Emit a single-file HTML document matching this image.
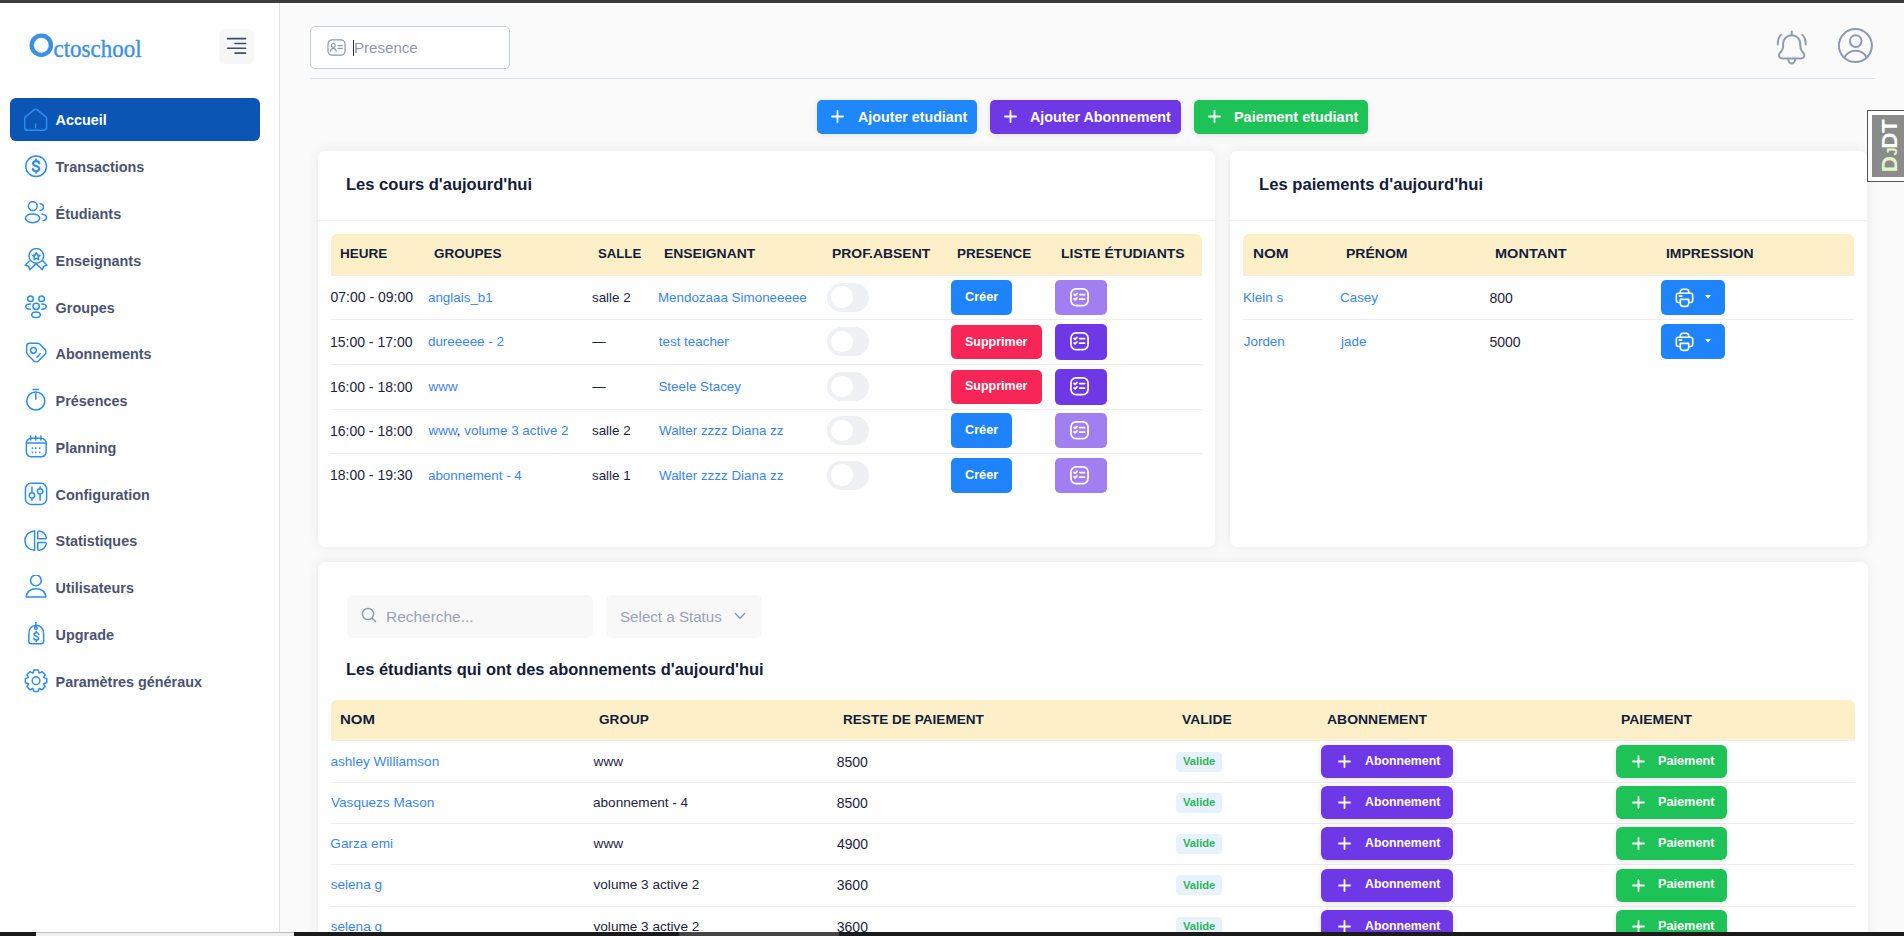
<!DOCTYPE html>
<html><head><meta charset="utf-8">
<style>
*{box-sizing:border-box;margin:0;padding:0}
html,body{width:1904px;height:936px;overflow:hidden;background:#fafafa;font-family:"Liberation Sans",sans-serif;color:#1f2433}
.a{position:absolute}
.t{position:absolute;line-height:0;white-space:nowrap}
#topbar{left:0;top:0;width:1904px;height:3px;background:#3c3c3c}
#side{left:0;top:3px;width:280px;height:933px;background:#fff;border-right:1px solid #dfe2ec}
.logoO{left:29px;top:33px;width:24px;height:24px}
.logoT{left:53.5px;top:35.5px;-webkit-text-stroke:0.35px #3d90e4;font-family:"Liberation Serif",serif;font-size:23px;color:#3d90e4;line-height:30px;transform:scaleY(1.08);transform-origin:0 100%}
.menubtn{left:219px;top:29px;width:35px;height:35px;border-radius:6px;background:#f7f7f8}
.ic{fill:none;stroke:#2d8cf0;stroke-width:1.5;stroke-linecap:round;stroke-linejoin:round}
.nav{left:10px;width:250px;height:43px;border-radius:6px;display:flex;align-items:center;font-weight:bold;font-size:14.4px;color:#4a5372}
.nav svg{position:absolute;left:14px;top:9.5px;width:24px;height:24px;fill:none;stroke:#2d8cf0;stroke-width:1.5;stroke-linecap:round;stroke-linejoin:round}
.nav span{position:absolute;left:46px}
.nav.act{background:#0b56b4;color:#fff}
.nav.act svg{stroke:#2d8cf0}
</style></head><body>
<div id="topbar" class="a"></div>
<div id="side" class="a"></div>
<svg class="a" style="left:29px;top:33px" width="25" height="25" viewBox="0 0 25 25"><ellipse cx="12.3" cy="12.2" rx="9.6" ry="9.65" fill="none" stroke="#3a8fe6" stroke-width="4.3"/></svg>
<div class="a logoT">ctoschool</div>
<div class="a menubtn"><svg width="35" height="35" viewBox="0 0 35 35" style="position:absolute;left:0;top:0" stroke="#414b6e" stroke-width="1.6" stroke-linecap="round"><path d="M8.5 9.6H26.6M16 14.5H26.6M8.5 19.3H26.6M16 24.1H26.6"/></svg></div>
<div class="a" style="left:10px;top:98px;width:250px;height:43px;border-radius:6px;background:#0b56b4"></div>
<svg class="a ic" style="left:24px;top:107.70px" width="24" height="24" viewBox="0 0 24 24"><path d="M0.6 10.9Q0.6 9.7 1.5 8.9L9.9 1.9Q11.6 .6 13.3 1.9L21.7 8.9Q22.6 9.7 22.6 10.9V19.1Q22.6 22.3 19.4 22.3H3.8Q0.6 22.3 0.6 19.1Z"/><path d="M11.6 16v3.8"/></svg>
<div class="t" style="left:55.6px;top:120.26px;font-size:14.4px;font-weight:bold;color:#fff">Accueil</div>
<svg class="a ic" style="left:24px;top:154.45px" width="24" height="24" viewBox="0 0 24 24"><circle cx="12.1" cy="12.25" r="10.35"/><path stroke-width="2.1" d="M15.3 9.2C15.1 7.8 13.9 7.1 12.1 7.1C10.2 7.1 9 8 9 9.4C9 12.6 15.3 11.3 15.3 14.8C15.3 16.3 14 17.2 12.1 17.2C10.2 17.2 9 16.4 8.8 14.9M12.1 5.5V7.1M12.1 17.2V18.8"/></svg>
<div class="t" style="left:55.6px;top:167.31px;font-size:14.4px;font-weight:bold;color:#4a5372">Transactions</div>
<svg class="a ic" style="left:24px;top:201.20px" width="24" height="24" viewBox="0 0 24 24"><circle cx="8.8" cy="5.05" r="4.4"/><ellipse cx="8.6" cy="17.3" rx="7.15" ry="4.35"/><path d="M16.1 2.75a3.35 3.35 0 0 1 0 6.7"/><path d="M17.9 12.9C20.7 13.4 22.6 14.9 22.6 16.5C22.6 17.9 21.3 19 19.1 19.6"/></svg>
<div class="t" style="left:55.6px;top:214.06px;font-size:14.4px;font-weight:bold;color:#4a5372">Étudiants</div>
<svg class="a ic" style="left:24px;top:247.95px" width="24" height="24" viewBox="0 0 24 24"><circle cx="12.3" cy="7.9" r="7.3"/><path d="M12.3 4.8L13.4 7.1L15.9 7.4L14.1 9.1L14.6 11.6L12.3 10.4L10 11.6L10.5 9.1L8.7 7.4L11.2 7.1Z"/><path d="M5.3 13.1L1.2 17.3L4.5 18.2L5.9 21.7L12.1 15.6L18.3 21.7L19.7 18.2L23 17.3L19 13.1"/></svg>
<div class="t" style="left:55.6px;top:260.81px;font-size:14.4px;font-weight:bold;color:#4a5372">Enseignants</div>
<svg class="a ic" style="left:24px;top:294.70px" width="24" height="24" viewBox="0 0 24 24"><circle cx="6.5" cy="3.75" r="2.85"/><circle cx="17.6" cy="3.75" r="2.85"/><circle cx="12.1" cy="11.35" r="3.2"/><ellipse cx="12" cy="19.8" rx="4.25" ry="2.75"/><path d="M6.4 9.1C3.6 9.3 1.75 10.4 1.75 11.7C1.75 13 3.6 14 6.4 14.2M17.8 9.1C20.6 9.3 22.3 10.4 22.3 11.7C22.3 13 20.6 14 17.8 14.2"/></svg>
<div class="t" style="left:55.6px;top:307.56px;font-size:14.4px;font-weight:bold;color:#4a5372">Groupes</div>
<svg class="a ic" style="left:24px;top:341.45px" width="24" height="24" viewBox="0 0 24 24"><path d="M2.65 5.6C2.65 3.3 3.3 2.4 5.6 2.35H13.6C14.7 2.35 15.3 2.7 16.1 3.5L21 8.4C22.3 9.7 22.3 12 21 13.3L14.6 19.7C13.3 21 11 21 9.7 19.7L4 14C3 13 2.65 12.4 2.65 11Z"/><circle cx="9.45" cy="9.3" r="2.85"/><path d="M12.9 16.3L16.2 12.8"/></svg>
<div class="t" style="left:55.6px;top:354.31px;font-size:14.4px;font-weight:bold;color:#4a5372">Abonnements</div>
<svg class="a ic" style="left:24px;top:388.20px" width="24" height="24" viewBox="0 0 24 24"><circle cx="11.8" cy="13" r="9.05"/><path d="M9.2 1.6H14.4M11.8 5.6V11.3"/></svg>
<div class="t" style="left:55.6px;top:401.06px;font-size:14.4px;font-weight:bold;color:#4a5372">Présences</div>
<svg class="a ic" style="left:24px;top:434.95px" width="24" height="24" viewBox="0 0 24 24"><rect x="2.35" y="3.35" width="19.8" height="18.5" rx="5"/><path d="M2.35 8.1H22.15M6.7 1.1V5M11.8 1.1V5M16.9 1.1V5"/><path stroke-width="1.7" d="M8.4 13.2h.1M11.8 13.2h.1M15.6 13.2h.1M8.4 17.3h.1M11.8 17.3h.1M15.6 17.3h.1"/></svg>
<div class="t" style="left:55.6px;top:447.81px;font-size:14.4px;font-weight:bold;color:#4a5372">Planning</div>
<svg class="a ic" style="left:24px;top:481.70px" width="24" height="24" viewBox="0 0 24 24"><rect x="1.45" y="1.35" width="21.15" height="21.1" rx="5.5"/><circle cx="7.95" cy="13.4" r="2.7"/><circle cx="16.1" cy="9.35" r="2.7"/><path d="M7.95 5.1V10M7.95 16.8V18.2M16.1 4.7V5.9M16.1 12.8V18.2"/></svg>
<div class="t" style="left:55.6px;top:494.56px;font-size:14.4px;font-weight:bold;color:#4a5372">Configuration</div>
<svg class="a ic" style="left:24px;top:528.45px" width="24" height="24" viewBox="0 0 24 24"><path d="M10.6 2.9A9.7 9.7 0 0 0 10.6 22.3Z"/><path d="M13.75 10.8V4.4C13.75 3.5 14.4 2.8 15.3 3C18.8 3.6 21.6 6.6 22.3 9.4C22.4 10.2 21.9 10.8 21 10.8Z"/><path d="M13.75 14.4V20.9C13.75 21.8 14.4 22.5 15.3 22.3C18.8 21.7 21.6 18.7 22.3 15.9C22.4 15.1 21.9 14.4 21 14.4Z"/></svg>
<div class="t" style="left:55.6px;top:541.31px;font-size:14.4px;font-weight:bold;color:#4a5372">Statistiques</div>
<svg class="a ic" style="left:24px;top:575.20px" width="24" height="24" viewBox="0 0 24 24"><circle cx="11.9" cy="5.4" r="5.35"/><path d="M2.35 21.95C2.35 16.9 6.6 13.65 12 13.65C17.4 13.65 21.75 16.9 21.75 21.95Z"/></svg>
<div class="t" style="left:55.6px;top:588.06px;font-size:14.4px;font-weight:bold;color:#4a5372">Utilisateurs</div>
<svg class="a ic" style="left:24px;top:621.95px" width="24" height="24" viewBox="0 0 24 24"><path d="M4.85 12C4.85 6.5 8 3.2 12.2 3.2C16.4 3.2 19.65 6.5 19.65 12V19.3C19.65 21.1 18.9 21.8 17.1 21.8H7.3C5.5 21.8 4.85 21.1 4.85 19.3Z"/><circle cx="11.9" cy="5.9" r="1.3"/><path d="M11.9 0.3V4.6"/><path stroke-width="1.6" d="M14.6 12.4C14.4 11.3 13.4 10.8 12.2 10.8C10.9 10.8 10 11.5 10 12.5C10 14.7 14.6 13.7 14.6 16.2C14.6 17.3 13.7 18 12.2 18C10.9 18 10 17.4 9.8 16.4M12.2 9.6V10.8M12.2 18V19.4"/></svg>
<div class="t" style="left:55.6px;top:634.81px;font-size:14.4px;font-weight:bold;color:#4a5372">Upgrade</div>
<svg class="a ic" style="left:24px;top:668.70px" width="24" height="24" viewBox="0 0 24 24"><circle cx="12.05" cy="11.7" r="3.85"/><path d="M8.94 4.00 L9.97 1.00 L14.13 1.00 L15.16 4.00 L15.29 4.06 L18.15 2.66 L21.09 5.60 L19.69 8.46 L19.75 8.59 L22.75 9.62 L22.75 13.78 L19.75 14.81 L19.69 14.94 L21.09 17.80 L18.15 20.74 L15.29 19.34 L15.16 19.40 L14.13 22.40 L9.97 22.40 L8.94 19.40 L8.81 19.34 L5.95 20.74 L3.01 17.80 L4.41 14.94 L4.35 14.81 L1.35 13.78 L1.35 9.62 L4.35 8.59 L4.41 8.46 L3.01 5.60 L5.95 2.66 L8.81 4.06Z"/></svg>
<div class="t" style="left:55.6px;top:681.56px;font-size:14.4px;font-weight:bold;color:#4a5372">Paramètres généraux</div>
<div class="a" style="left:280.00px;top:3.00px;width:1624.00px;height:1.00px;background:#fff;border-radius:0px;"></div>
<div class="a" style="left:310px;top:26px;width:200px;height:43px;border:1px solid #c7cddc;border-radius:5px;background:#fff"></div>
<svg class="a" style="left:327px;top:39px" width="19" height="17" viewBox="0 0 19 17" fill="none" stroke="#8e98b4" stroke-width="1.2" stroke-linecap="round"><rect x="1" y="0.8" width="17" height="15.4" rx="4.2"/><circle cx="6.3" cy="6.4" r="1.9"/><path d="M3.4 12.2c.4-1.8 1.6-2.8 2.9-2.8s2.5 1 2.9 2.8M11 6.6h4.3M11 9.3h4.3"/></svg>
<div class="a" style="left:353.00px;top:39.50px;width:1.30px;height:16.50px;background:#2e3555;border-radius:0px;"></div>
<div class="t" style="left:353.66px;top:47.78px;font-size:14.2px;color:#8f98b4;transform:scaleX(1.0653);transform-origin:1.14px 0;">Presence</div>
<div class="a" style="left:310.00px;top:78.00px;width:1565.00px;height:1.00px;background:#dde1ec;border-radius:0px;"></div>
<svg class="a" style="left:1766px;top:22px" width="116" height="50" viewBox="0 0 116 50" fill="none" stroke="#8e99b5" stroke-width="2" stroke-linecap="round" stroke-linejoin="round"><path d="M25.7 9.4V12.6"/><path d="M25.7 13.2C20.9 13.2 17.1 17 17.1 21.8V24.6C17.1 26.4 16.5 27.8 15.4 29.2L13.8 31.2C12.2 33.3 13.4 36.5 16.2 36.5H35.2C38 36.5 39.2 33.3 37.6 31.2L36 29.2C34.9 27.8 34.3 26.4 34.3 24.6V21.8C34.3 17 30.5 13.2 25.7 13.2Z"/><path d="M22.2 36.8C22.2 39.2 23.8 41.5 25.7 41.5C27.6 41.5 29.2 39.2 29.2 36.8"/><path d="M15 12.9C12.9 14.9 11.7 17.8 11.7 22.4M36.4 12.9C38.5 14.9 39.7 17.8 39.7 22.4"/><circle cx="89.4" cy="23.6" r="16.5"/><circle cx="89.75" cy="19.05" r="5.85"/><path d="M78.6 35.2C81 31 85 28.7 89.6 28.7C94.2 28.7 98.2 31 100.6 35.2"/></svg>
<div class="a" style="left:1866.5px;top:109.5px;width:40px;height:72px;background:#fff;border:1px solid #555"></div>
<div class="a" style="left:1871.5px;top:115px;width:34px;height:61.6px;background:#8b8b8b"></div>
<svg class="a" style="left:0;top:0" width="1904" height="200" viewBox="0 0 1904 200"><text transform="translate(1897.2 170.80) rotate(-90)" x="-1.49" y="0" font-family="Liberation Sans" font-weight="bold" font-size="22.6" fill="#e0f8cc">D</text><text transform="translate(1897.2 155.40) rotate(-90)" x="-0.22" y="0" font-family="Liberation Sans" font-weight="bold" font-size="14.6" fill="#e0f8cc">J</text><text transform="translate(1897.2 147.30) rotate(-90)" x="-1.49" y="0" font-family="Liberation Sans" font-weight="bold" font-size="22.6" fill="#fff">D</text><text transform="translate(1897.2 132.80) rotate(-90)" x="-0.25" y="0" font-family="Liberation Sans" font-weight="bold" font-size="22.6" fill="#fff">T</text></svg>
<div class="a" style="left:817.00px;top:100.00px;width:160.00px;height:34.00px;background:#1e87fa;border-radius:5px;box-shadow:0 1px 6px rgba(0,0,0,0.10)"></div>
<svg class="a" style="left:831px;top:110px" width="13" height="13" viewBox="0 0 13 13" stroke="#fff" stroke-width="1.8" stroke-linecap="round"><path d="M6.5 1v11M1 6.5h11"/></svg>
<div class="t" style="left:858.04px;top:116.91px;font-size:14.4px;color:#fff;font-weight:bold;transform:scaleX(0.9896);transform-origin:0.36px 0;">Ajouter etudiant</div>
<div class="a" style="left:990.00px;top:100.00px;width:191.00px;height:34.00px;background:#6f38e5;border-radius:5px;box-shadow:0 1px 6px rgba(0,0,0,0.10)"></div>
<svg class="a" style="left:1004px;top:110px" width="13" height="13" viewBox="0 0 13 13" stroke="#fff" stroke-width="1.8" stroke-linecap="round"><path d="M6.5 1v11M1 6.5h11"/></svg>
<div class="t" style="left:1030.14px;top:116.91px;font-size:14.4px;color:#fff;font-weight:bold;transform:scaleX(0.9936);transform-origin:0.36px 0;">Ajouter Abonnement</div>
<div class="a" style="left:1194.00px;top:100.00px;width:174.00px;height:34.00px;background:#1dc356;border-radius:5px;box-shadow:0 1px 6px rgba(0,0,0,0.10)"></div>
<svg class="a" style="left:1208px;top:110px" width="13" height="13" viewBox="0 0 13 13" stroke="#fff" stroke-width="1.8" stroke-linecap="round"><path d="M6.5 1v11M1 6.5h11"/></svg>
<div class="t" style="left:1233.56px;top:116.91px;font-size:14.4px;color:#fff;font-weight:bold;transform:scaleX(1.0026);transform-origin:0.94px 0;">Paiement etudiant</div>
<div class="a" style="left:318.00px;top:151.00px;width:897.00px;height:396.00px;background:#fff;border-radius:7px;box-shadow:0 0 14px rgba(0,0,0,0.065)"></div>
<div class="a" style="left:1230.00px;top:151.00px;width:637.00px;height:396.00px;background:#fff;border-radius:7px;box-shadow:0 0 14px rgba(0,0,0,0.065)"></div>
<div class="a" style="left:318.00px;top:562.00px;width:1550.00px;height:400.00px;background:#fff;border-radius:7px;box-shadow:0 0 14px rgba(0,0,0,0.065)"></div>
<div class="t" style="left:346.42px;top:185.25px;font-size:16.6px;color:#141c3a;font-weight:bold;transform:scaleX(0.9963);transform-origin:1.08px 0;">Les cours d'aujourd'hui</div>
<div class="a" style="left:318.00px;top:220.00px;width:897.00px;height:1.00px;background:#eef0f3;border-radius:0px;"></div>
<div class="a" style="left:331.00px;top:234.00px;width:871.00px;height:41.50px;background:#fdf0c9;border-radius:6px 6px 0 0;"></div>
<div class="a" style="left:331.00px;top:275.00px;width:871.00px;height:1.00px;background:#eceef3;border-radius:0px;"></div>
<div class="t" style="left:339.71px;top:254.25px;font-size:13.7px;color:#141c3a;font-weight:bold;transform:scaleX(0.9875);transform-origin:0.89px 0;">HEURE</div>
<div class="t" style="left:433.75px;top:254.25px;font-size:13.7px;color:#141c3a;font-weight:bold;transform:scaleX(0.9871);transform-origin:0.55px 0;">GROUPES</div>
<div class="t" style="left:597.86px;top:254.25px;font-size:13.7px;color:#141c3a;font-weight:bold;transform:scaleX(0.9626);transform-origin:0.34px 0;">SALLE</div>
<div class="t" style="left:663.81px;top:254.25px;font-size:13.7px;color:#141c3a;font-weight:bold;transform:scaleX(1.0175);transform-origin:0.89px 0;">ENSEIGNANT</div>
<div class="t" style="left:832.11px;top:254.25px;font-size:13.7px;color:#141c3a;font-weight:bold;transform:scaleX(1.0168);transform-origin:0.89px 0;">PROF.ABSENT</div>
<div class="t" style="left:956.71px;top:254.25px;font-size:13.7px;color:#141c3a;font-weight:bold;transform:scaleX(0.9854);transform-origin:0.89px 0;">PRESENCE</div>
<div class="t" style="left:1060.71px;top:254.25px;font-size:13.7px;color:#141c3a;font-weight:bold;transform:scaleX(1.0226);transform-origin:0.89px 0;">LISTE ÉTUDIANTS</div>
<div class="a" style="left:331.00px;top:319.40px;width:871.00px;height:1.00px;background:#ececf1;border-radius:0px;"></div>
<div class="a" style="left:331.00px;top:364.20px;width:871.00px;height:1.00px;background:#ececf1;border-radius:0px;"></div>
<div class="a" style="left:331.00px;top:408.50px;width:871.00px;height:1.00px;background:#ececf1;border-radius:0px;"></div>
<div class="a" style="left:331.00px;top:453.20px;width:871.00px;height:1.00px;background:#ececf1;border-radius:0px;"></div>
<div class="t" style="left:330.51px;top:297.45px;font-size:14px;color:#1c2340;">07:00 - 09:00</div>
<div class="t" style="left:427.96px;top:297.66px;font-size:13.4px;color:#3a85f6;">anglais_b1</div>
<div class="t" style="left:591.96px;top:297.66px;font-size:13.4px;color:#1c2340;">salle 2</div>
<div class="t" style="left:657.93px;top:297.66px;font-size:13.4px;color:#3a85f6;">Mendozaaa Simoneeeee</div>
<div class="a" style="left:827.00px;top:282.80px;width:42.00px;height:29.00px;background:#eff0f3;border-radius:15px;"></div>
<div class="a" style="left:831.00px;top:286.40px;width:21.60px;height:21.60px;background:#fff;border-radius:11px;"></div>
<div class="a" style="left:951.00px;top:279.80px;width:61.00px;height:35.00px;background:#1f84fb;border-radius:5px;"></div>
<div class="t" style="left:965.20px;top:296.93px;font-size:12.6px;color:#fff;font-weight:bold;transform:scaleX(1.0076);transform-origin:0.50px 0;">Créer</div>
<div class="a" style="left:1055.00px;top:279.80px;width:52.00px;height:35.00px;background:#a27ff0;border-radius:5px;"></div>
<svg class="a" style="left:1070px;top:287.70px" width="19" height="19" viewBox="0 0 19 19" fill="none" stroke="#fff" stroke-width="1.7" stroke-linecap="round" stroke-linejoin="round"><rect x="0.95" y="0.95" width="17.1" height="16.6" rx="5"/><path d="M4 6.4l1.1 1.1 1.9-2.1M4 10.9l1.1 1.1 1.9-2.1M9.6 6.6h5M9.6 11.2h5" /></svg>
<div class="t" style="left:329.95px;top:341.85px;font-size:14px;color:#1c2340;">15:00 - 17:00</div>
<div class="t" style="left:427.96px;top:342.06px;font-size:13.4px;color:#3a85f6;">dureeeee - 2</div>
<div class="t" style="left:592.30px;top:342.06px;font-size:13.4px;color:#1c2340;">—</div>
<div class="t" style="left:658.80px;top:342.06px;font-size:13.4px;color:#3a85f6;">test teacher</div>
<div class="a" style="left:827.00px;top:327.20px;width:42.00px;height:29.00px;background:#eff0f3;border-radius:15px;"></div>
<div class="a" style="left:831.00px;top:330.80px;width:21.60px;height:21.60px;background:#fff;border-radius:11px;"></div>
<div class="a" style="left:951.00px;top:324.70px;width:91.00px;height:34.00px;background:#f72656;border-radius:5px;"></div>
<div class="t" style="left:965.38px;top:341.53px;font-size:12.6px;color:#fff;font-weight:bold;transform:scaleX(0.9921);transform-origin:0.32px 0;">Supprimer</div>
<div class="a" style="left:1055.00px;top:323.70px;width:52.00px;height:36.00px;background:#6f38e6;border-radius:5px;"></div>
<svg class="a" style="left:1070px;top:332.10px" width="19" height="19" viewBox="0 0 19 19" fill="none" stroke="#fff" stroke-width="1.7" stroke-linecap="round" stroke-linejoin="round"><rect x="0.95" y="0.95" width="17.1" height="16.6" rx="5"/><path d="M4 6.4l1.1 1.1 1.9-2.1M4 10.9l1.1 1.1 1.9-2.1M9.6 6.6h5M9.6 11.2h5" /></svg>
<div class="t" style="left:329.95px;top:386.65px;font-size:14px;color:#1c2340;">16:00 - 18:00</div>
<div class="t" style="left:428.57px;top:386.86px;font-size:13.4px;color:#3a85f6;">www</div>
<div class="t" style="left:592.30px;top:386.86px;font-size:13.4px;color:#1c2340;">—</div>
<div class="t" style="left:658.40px;top:386.86px;font-size:13.4px;color:#3a85f6;">Steele Stacey</div>
<div class="a" style="left:827.00px;top:372.00px;width:42.00px;height:29.00px;background:#eff0f3;border-radius:15px;"></div>
<div class="a" style="left:831.00px;top:375.60px;width:21.60px;height:21.60px;background:#fff;border-radius:11px;"></div>
<div class="a" style="left:951.00px;top:369.50px;width:91.00px;height:34.00px;background:#f72656;border-radius:5px;"></div>
<div class="t" style="left:965.38px;top:386.33px;font-size:12.6px;color:#fff;font-weight:bold;transform:scaleX(0.9921);transform-origin:0.32px 0;">Supprimer</div>
<div class="a" style="left:1055.00px;top:368.50px;width:52.00px;height:36.00px;background:#6f38e6;border-radius:5px;"></div>
<svg class="a" style="left:1070px;top:376.90px" width="19" height="19" viewBox="0 0 19 19" fill="none" stroke="#fff" stroke-width="1.7" stroke-linecap="round" stroke-linejoin="round"><rect x="0.95" y="0.95" width="17.1" height="16.6" rx="5"/><path d="M4 6.4l1.1 1.1 1.9-2.1M4 10.9l1.1 1.1 1.9-2.1M9.6 6.6h5M9.6 11.2h5" /></svg>
<div class="t" style="left:329.95px;top:430.85px;font-size:14px;color:#1c2340;">16:00 - 18:00</div>
<div class="t" style="left:428.57px;top:431.06px;font-size:13.4px;color:#3a85f6;">www<span style="color:#1c2340">,</span> volume 3 active 2</div>
<div class="t" style="left:591.96px;top:431.06px;font-size:13.4px;color:#1c2340;">salle 2</div>
<div class="t" style="left:659.00px;top:431.06px;font-size:13.4px;color:#3a85f6;">Walter zzzz Diana zz</div>
<div class="a" style="left:827.00px;top:416.20px;width:42.00px;height:29.00px;background:#eff0f3;border-radius:15px;"></div>
<div class="a" style="left:831.00px;top:419.80px;width:21.60px;height:21.60px;background:#fff;border-radius:11px;"></div>
<div class="a" style="left:951.00px;top:413.20px;width:61.00px;height:35.00px;background:#1f84fb;border-radius:5px;"></div>
<div class="t" style="left:965.20px;top:430.33px;font-size:12.6px;color:#fff;font-weight:bold;transform:scaleX(1.0076);transform-origin:0.50px 0;">Créer</div>
<div class="a" style="left:1055.00px;top:413.20px;width:52.00px;height:35.00px;background:#a27ff0;border-radius:5px;"></div>
<svg class="a" style="left:1070px;top:421.10px" width="19" height="19" viewBox="0 0 19 19" fill="none" stroke="#fff" stroke-width="1.7" stroke-linecap="round" stroke-linejoin="round"><rect x="0.95" y="0.95" width="17.1" height="16.6" rx="5"/><path d="M4 6.4l1.1 1.1 1.9-2.1M4 10.9l1.1 1.1 1.9-2.1M9.6 6.6h5M9.6 11.2h5" /></svg>
<div class="t" style="left:329.95px;top:475.45px;font-size:14px;color:#1c2340;">18:00 - 19:30</div>
<div class="t" style="left:427.96px;top:475.66px;font-size:13.4px;color:#3a85f6;">abonnement - 4</div>
<div class="t" style="left:591.96px;top:475.66px;font-size:13.4px;color:#1c2340;">salle 1</div>
<div class="t" style="left:659.00px;top:475.66px;font-size:13.4px;color:#3a85f6;">Walter zzzz Diana zz</div>
<div class="a" style="left:827.00px;top:460.80px;width:42.00px;height:29.00px;background:#eff0f3;border-radius:15px;"></div>
<div class="a" style="left:831.00px;top:464.40px;width:21.60px;height:21.60px;background:#fff;border-radius:11px;"></div>
<div class="a" style="left:951.00px;top:457.80px;width:61.00px;height:35.00px;background:#1f84fb;border-radius:5px;"></div>
<div class="t" style="left:965.20px;top:474.93px;font-size:12.6px;color:#fff;font-weight:bold;transform:scaleX(1.0076);transform-origin:0.50px 0;">Créer</div>
<div class="a" style="left:1055.00px;top:457.80px;width:52.00px;height:35.00px;background:#a27ff0;border-radius:5px;"></div>
<svg class="a" style="left:1070px;top:465.70px" width="19" height="19" viewBox="0 0 19 19" fill="none" stroke="#fff" stroke-width="1.7" stroke-linecap="round" stroke-linejoin="round"><rect x="0.95" y="0.95" width="17.1" height="16.6" rx="5"/><path d="M4 6.4l1.1 1.1 1.9-2.1M4 10.9l1.1 1.1 1.9-2.1M9.6 6.6h5M9.6 11.2h5" /></svg>
<div class="t" style="left:1259.02px;top:185.25px;font-size:16.6px;color:#141c3a;font-weight:bold;transform:scaleX(1.0017);transform-origin:1.08px 0;">Les paiements d'aujourd'hui</div>
<div class="a" style="left:1230.00px;top:220.00px;width:637.00px;height:1.00px;background:#eef0f3;border-radius:0px;"></div>
<div class="a" style="left:1243.00px;top:234.00px;width:611.00px;height:41.50px;background:#fdf0c9;border-radius:6px 6px 0 0;"></div>
<div class="a" style="left:1243.00px;top:275.00px;width:611.00px;height:1.00px;background:#eceef3;border-radius:0px;"></div>
<div class="t" style="left:1252.51px;top:254.25px;font-size:13.7px;color:#141c3a;font-weight:bold;transform:scaleX(1.1189);transform-origin:0.89px 0;">NOM</div>
<div class="t" style="left:1345.91px;top:254.25px;font-size:13.7px;color:#141c3a;font-weight:bold;transform:scaleX(1.0246);transform-origin:0.89px 0;">PRÉNOM</div>
<div class="t" style="left:1495.41px;top:254.25px;font-size:13.7px;color:#141c3a;font-weight:bold;transform:scaleX(1.0629);transform-origin:0.89px 0;">MONTANT</div>
<div class="t" style="left:1666.11px;top:254.25px;font-size:13.7px;color:#141c3a;font-weight:bold;transform:scaleX(1.0192);transform-origin:0.89px 0;">IMPRESSION</div>
<div class="a" style="left:1243.00px;top:319.40px;width:611.00px;height:1.00px;background:#ececf1;border-radius:0px;"></div>
<div class="t" style="left:1242.93px;top:297.86px;font-size:13.4px;color:#3a85f6;">Klein s</div>
<div class="t" style="left:1340.03px;top:297.86px;font-size:13.4px;color:#3a85f6;">Casey</div>
<div class="t" style="left:1489.44px;top:297.65px;font-size:14px;color:#1c2340;">800</div>
<div class="a" style="left:1661.00px;top:280.10px;width:64.00px;height:35.00px;background:#1f84fb;border-radius:5px;"></div>
<svg class="a" style="left:1675px;top:288.00px" width="19" height="20" viewBox="0 0 19 20" fill="none" stroke="#fff" stroke-width="1.6" stroke-linejoin="round"><path d="M5.3 5V3.8c0-1.5 1-2.5 2.5-2.5h3.4c1.5 0 2.5 1 2.5 2.5V5"/><path d="M5 14.5H3.5c-1.3 0-2.2-.9-2.2-2.2V7.4c0-1.3.9-2.2 2.2-2.2h12c1.3 0 2.2.9 2.2 2.2v4.9c0 1.3-.9 2.2-2.2 2.2H14"/><path d="M5.3 11.4h8.4v3.9c0 1.8-1.2 3.1-3 3.1H8.3c-1.8 0-3-1.3-3-3.1z"/><path d="M4.2 8.1h2.6" stroke-linecap="round"/></svg>
<svg class="a" style="left:1705px;top:295.20px" width="6" height="3.5" viewBox="0 0 6 3.5"><path d="M0 0h6L3 3.5z" fill="#fff"/></svg>
<div class="t" style="left:1243.80px;top:341.86px;font-size:13.4px;color:#3a85f6;">Jorden</div>
<div class="t" style="left:1341.04px;top:341.86px;font-size:13.4px;color:#3a85f6;">jade</div>
<div class="t" style="left:1489.44px;top:341.65px;font-size:14px;color:#1c2340;">5000</div>
<div class="a" style="left:1661.00px;top:324.10px;width:64.00px;height:35.00px;background:#1f84fb;border-radius:5px;"></div>
<svg class="a" style="left:1675px;top:332.00px" width="19" height="20" viewBox="0 0 19 20" fill="none" stroke="#fff" stroke-width="1.6" stroke-linejoin="round"><path d="M5.3 5V3.8c0-1.5 1-2.5 2.5-2.5h3.4c1.5 0 2.5 1 2.5 2.5V5"/><path d="M5 14.5H3.5c-1.3 0-2.2-.9-2.2-2.2V7.4c0-1.3.9-2.2 2.2-2.2h12c1.3 0 2.2.9 2.2 2.2v4.9c0 1.3-.9 2.2-2.2 2.2H14"/><path d="M5.3 11.4h8.4v3.9c0 1.8-1.2 3.1-3 3.1H8.3c-1.8 0-3-1.3-3-3.1z"/><path d="M4.2 8.1h2.6" stroke-linecap="round"/></svg>
<svg class="a" style="left:1705px;top:339.20px" width="6" height="3.5" viewBox="0 0 6 3.5"><path d="M0 0h6L3 3.5z" fill="#fff"/></svg>
<div class="a" style="left:347px;top:595px;width:246px;height:43px;background:#f8f8f9;border-radius:6px"></div>
<svg class="a" style="left:361px;top:606.5px" width="16" height="16" viewBox="0 0 16 16" fill="none" stroke="#8e98b4" stroke-width="1.5" stroke-linecap="round"><circle cx="7" cy="7" r="5.6"/><path d="M11.2 11.2l3.3 3.3"/></svg>
<div class="t" style="left:386.17px;top:616.66px;font-size:15.4px;color:#9aa1b8;transform:scaleX(1.0035);transform-origin:1.23px 0;">Recherche...</div>
<div class="a" style="left:606px;top:595px;width:156px;height:43px;background:#f8f8f9;border-radius:6px"></div>
<div class="t" style="left:619.61px;top:616.66px;font-size:15.4px;color:#9aa1b8;transform:scaleX(0.9831);transform-origin:0.69px 0;">Select a Status</div>
<svg class="a" style="left:734px;top:612px" width="12" height="8" viewBox="0 0 12 8" fill="none" stroke="#8e98b4" stroke-width="1.5" stroke-linecap="round" stroke-linejoin="round"><path d="M1.3 1.5l4.7 4.7 4.7-4.7"/></svg>
<div class="t" style="left:346.32px;top:669.85px;font-size:16.6px;color:#141c3a;font-weight:bold;transform:scaleX(0.9921);transform-origin:1.08px 0;">Les étudiants qui ont des abonnements d'aujourd'hui</div>
<div class="a" style="left:331.00px;top:700.00px;width:1524.00px;height:40.50px;background:#fdf0c9;border-radius:6px 6px 0 0;"></div>
<div class="a" style="left:331.00px;top:740.00px;width:1524.00px;height:1.00px;background:#eceef3;border-radius:0px;"></div>
<div class="t" style="left:339.91px;top:719.95px;font-size:13.7px;color:#141c3a;font-weight:bold;transform:scaleX(1.0957);transform-origin:0.89px 0;">NOM</div>
<div class="t" style="left:599.15px;top:719.95px;font-size:13.7px;color:#141c3a;font-weight:bold;transform:scaleX(0.9929);transform-origin:0.55px 0;">GROUP</div>
<div class="t" style="left:843.21px;top:719.95px;font-size:13.7px;color:#141c3a;font-weight:bold;transform:scaleX(0.9921);transform-origin:0.89px 0;">RESTE DE PAIEMENT</div>
<div class="t" style="left:1182.03px;top:719.95px;font-size:13.7px;color:#141c3a;font-weight:bold;transform:scaleX(1.0096);transform-origin:0.07px 0;">VALIDE</div>
<div class="t" style="left:1327.06px;top:719.95px;font-size:13.7px;color:#141c3a;font-weight:bold;transform:scaleX(1.0200);transform-origin:0.34px 0;">ABONNEMENT</div>
<div class="t" style="left:1621.21px;top:719.95px;font-size:13.7px;color:#141c3a;font-weight:bold;transform:scaleX(1.0207);transform-origin:0.89px 0;">PAIEMENT</div>
<div class="a" style="left:331.00px;top:782.00px;width:1524.00px;height:1.00px;background:#ececf1;border-radius:0px;"></div>
<div class="a" style="left:331.00px;top:823.40px;width:1524.00px;height:1.00px;background:#ececf1;border-radius:0px;"></div>
<div class="a" style="left:331.00px;top:864.40px;width:1524.00px;height:1.00px;background:#ececf1;border-radius:0px;"></div>
<div class="a" style="left:331.00px;top:906.20px;width:1524.00px;height:1.00px;background:#ececf1;border-radius:0px;"></div>
<div class="t" style="left:330.46px;top:761.79px;font-size:13.6px;color:#3a85f6;">ashley Williamson</div>
<div class="t" style="left:593.57px;top:761.79px;font-size:13.6px;color:#1c2340;">www</div>
<div class="t" style="left:836.74px;top:761.65px;font-size:14px;color:#1c2340;">8500</div>
<div class="a" style="left:1176.00px;top:751.60px;width:46.00px;height:20.00px;background:#e8f2fd;border-radius:4px;"></div>
<div class="t" style="left:1182.94px;top:761.25px;font-size:11.4px;color:#2bb55a;font-weight:bold;transform:scaleX(0.9801);transform-origin:0.06px 0;">Valide</div>
<div class="a" style="left:1321.00px;top:745.00px;width:132.00px;height:33.00px;background:#6f38e6;border-radius:6px;box-shadow:0 1px 6px rgba(0,0,0,0.12)"></div>
<svg class="a" style="left:1337.5px;top:754.80px" width="13" height="13" viewBox="0 0 13 13" stroke="#fff" stroke-width="1.8" stroke-linecap="round"><path d="M6.5 1v11M1 6.5h11"/></svg>
<div class="t" style="left:1364.68px;top:760.73px;font-size:12.6px;color:#fff;font-weight:bold;transform:scaleX(0.9777);transform-origin:0.32px 0;">Abonnement</div>
<div class="a" style="left:1616.00px;top:745.00px;width:111.00px;height:33.00px;background:#1dc356;border-radius:6px;box-shadow:0 1px 6px rgba(0,0,0,0.12)"></div>
<svg class="a" style="left:1632px;top:754.80px" width="13" height="13" viewBox="0 0 13 13" stroke="#fff" stroke-width="1.8" stroke-linecap="round"><path d="M6.5 1v11M1 6.5h11"/></svg>
<div class="t" style="left:1658.18px;top:760.73px;font-size:12.6px;color:#fff;font-weight:bold;transform:scaleX(1.0086);transform-origin:0.82px 0;">Paiement</div>
<div class="t" style="left:331.00px;top:802.99px;font-size:13.6px;color:#3a85f6;">Vasquezs Mason</div>
<div class="t" style="left:592.96px;top:802.99px;font-size:13.6px;color:#1c2340;">abonnement - 4</div>
<div class="t" style="left:836.74px;top:802.85px;font-size:14px;color:#1c2340;">8500</div>
<div class="a" style="left:1176.00px;top:792.80px;width:46.00px;height:20.00px;background:#e8f2fd;border-radius:4px;"></div>
<div class="t" style="left:1182.94px;top:802.45px;font-size:11.4px;color:#2bb55a;font-weight:bold;transform:scaleX(0.9801);transform-origin:0.06px 0;">Valide</div>
<div class="a" style="left:1321.00px;top:786.20px;width:132.00px;height:33.00px;background:#6f38e6;border-radius:6px;box-shadow:0 1px 6px rgba(0,0,0,0.12)"></div>
<svg class="a" style="left:1337.5px;top:796.00px" width="13" height="13" viewBox="0 0 13 13" stroke="#fff" stroke-width="1.8" stroke-linecap="round"><path d="M6.5 1v11M1 6.5h11"/></svg>
<div class="t" style="left:1364.68px;top:801.93px;font-size:12.6px;color:#fff;font-weight:bold;transform:scaleX(0.9777);transform-origin:0.32px 0;">Abonnement</div>
<div class="a" style="left:1616.00px;top:786.20px;width:111.00px;height:33.00px;background:#1dc356;border-radius:6px;box-shadow:0 1px 6px rgba(0,0,0,0.12)"></div>
<svg class="a" style="left:1632px;top:796.00px" width="13" height="13" viewBox="0 0 13 13" stroke="#fff" stroke-width="1.8" stroke-linecap="round"><path d="M6.5 1v11M1 6.5h11"/></svg>
<div class="t" style="left:1658.18px;top:801.93px;font-size:12.6px;color:#fff;font-weight:bold;transform:scaleX(1.0086);transform-origin:0.82px 0;">Paiement</div>
<div class="t" style="left:330.32px;top:843.89px;font-size:13.6px;color:#3a85f6;">Garza emi</div>
<div class="t" style="left:593.57px;top:843.89px;font-size:13.6px;color:#1c2340;">www</div>
<div class="t" style="left:837.02px;top:843.75px;font-size:14px;color:#1c2340;">4900</div>
<div class="a" style="left:1176.00px;top:833.70px;width:46.00px;height:20.00px;background:#e8f2fd;border-radius:4px;"></div>
<div class="t" style="left:1182.94px;top:843.35px;font-size:11.4px;color:#2bb55a;font-weight:bold;transform:scaleX(0.9801);transform-origin:0.06px 0;">Valide</div>
<div class="a" style="left:1321.00px;top:827.10px;width:132.00px;height:33.00px;background:#6f38e6;border-radius:6px;box-shadow:0 1px 6px rgba(0,0,0,0.12)"></div>
<svg class="a" style="left:1337.5px;top:836.90px" width="13" height="13" viewBox="0 0 13 13" stroke="#fff" stroke-width="1.8" stroke-linecap="round"><path d="M6.5 1v11M1 6.5h11"/></svg>
<div class="t" style="left:1364.68px;top:842.83px;font-size:12.6px;color:#fff;font-weight:bold;transform:scaleX(0.9777);transform-origin:0.32px 0;">Abonnement</div>
<div class="a" style="left:1616.00px;top:827.10px;width:111.00px;height:33.00px;background:#1dc356;border-radius:6px;box-shadow:0 1px 6px rgba(0,0,0,0.12)"></div>
<svg class="a" style="left:1632px;top:836.90px" width="13" height="13" viewBox="0 0 13 13" stroke="#fff" stroke-width="1.8" stroke-linecap="round"><path d="M6.5 1v11M1 6.5h11"/></svg>
<div class="t" style="left:1658.18px;top:842.83px;font-size:12.6px;color:#fff;font-weight:bold;transform:scaleX(1.0086);transform-origin:0.82px 0;">Paiement</div>
<div class="t" style="left:330.66px;top:885.49px;font-size:13.6px;color:#3a85f6;">selena g</div>
<div class="t" style="left:593.50px;top:885.49px;font-size:13.6px;color:#1c2340;">volume 3 active 2</div>
<div class="t" style="left:836.81px;top:885.35px;font-size:14px;color:#1c2340;">3600</div>
<div class="a" style="left:1176.00px;top:875.30px;width:46.00px;height:20.00px;background:#e8f2fd;border-radius:4px;"></div>
<div class="t" style="left:1182.94px;top:884.95px;font-size:11.4px;color:#2bb55a;font-weight:bold;transform:scaleX(0.9801);transform-origin:0.06px 0;">Valide</div>
<div class="a" style="left:1321.00px;top:868.70px;width:132.00px;height:33.00px;background:#6f38e6;border-radius:6px;box-shadow:0 1px 6px rgba(0,0,0,0.12)"></div>
<svg class="a" style="left:1337.5px;top:878.50px" width="13" height="13" viewBox="0 0 13 13" stroke="#fff" stroke-width="1.8" stroke-linecap="round"><path d="M6.5 1v11M1 6.5h11"/></svg>
<div class="t" style="left:1364.68px;top:884.43px;font-size:12.6px;color:#fff;font-weight:bold;transform:scaleX(0.9777);transform-origin:0.32px 0;">Abonnement</div>
<div class="a" style="left:1616.00px;top:868.70px;width:111.00px;height:33.00px;background:#1dc356;border-radius:6px;box-shadow:0 1px 6px rgba(0,0,0,0.12)"></div>
<svg class="a" style="left:1632px;top:878.50px" width="13" height="13" viewBox="0 0 13 13" stroke="#fff" stroke-width="1.8" stroke-linecap="round"><path d="M6.5 1v11M1 6.5h11"/></svg>
<div class="t" style="left:1658.18px;top:884.43px;font-size:12.6px;color:#fff;font-weight:bold;transform:scaleX(1.0086);transform-origin:0.82px 0;">Paiement</div>
<div class="t" style="left:330.66px;top:926.69px;font-size:13.6px;color:#3a85f6;">selena g</div>
<div class="t" style="left:593.50px;top:926.69px;font-size:13.6px;color:#1c2340;">volume 3 active 2</div>
<div class="t" style="left:836.81px;top:926.55px;font-size:14px;color:#1c2340;">3600</div>
<div class="a" style="left:1176.00px;top:916.50px;width:46.00px;height:20.00px;background:#e8f2fd;border-radius:4px;"></div>
<div class="t" style="left:1182.94px;top:926.15px;font-size:11.4px;color:#2bb55a;font-weight:bold;transform:scaleX(0.9801);transform-origin:0.06px 0;">Valide</div>
<div class="a" style="left:1321.00px;top:909.90px;width:132.00px;height:33.00px;background:#6f38e6;border-radius:6px;box-shadow:0 1px 6px rgba(0,0,0,0.12)"></div>
<svg class="a" style="left:1337.5px;top:919.70px" width="13" height="13" viewBox="0 0 13 13" stroke="#fff" stroke-width="1.8" stroke-linecap="round"><path d="M6.5 1v11M1 6.5h11"/></svg>
<div class="t" style="left:1364.68px;top:925.63px;font-size:12.6px;color:#fff;font-weight:bold;transform:scaleX(0.9777);transform-origin:0.32px 0;">Abonnement</div>
<div class="a" style="left:1616.00px;top:909.90px;width:111.00px;height:33.00px;background:#1dc356;border-radius:6px;box-shadow:0 1px 6px rgba(0,0,0,0.12)"></div>
<svg class="a" style="left:1632px;top:919.70px" width="13" height="13" viewBox="0 0 13 13" stroke="#fff" stroke-width="1.8" stroke-linecap="round"><path d="M6.5 1v11M1 6.5h11"/></svg>
<div class="t" style="left:1658.18px;top:925.63px;font-size:12.6px;color:#fff;font-weight:bold;transform:scaleX(1.0086);transform-origin:0.82px 0;">Paiement</div>
<div class="a" style="left:0.00px;top:932.00px;width:1904.00px;height:4.00px;background:#1b1b1b;border-radius:0px;"></div>
<div class="a" style="left:36.00px;top:932.00px;width:258.00px;height:4.00px;background:#f0f0f0;border-radius:0;border-top:1px solid #bdbdbd"></div>
<div class="a" style="left:679.00px;top:932.00px;width:160.00px;height:4.00px;background:#454545;border-radius:0px;"></div>
</body></html>
